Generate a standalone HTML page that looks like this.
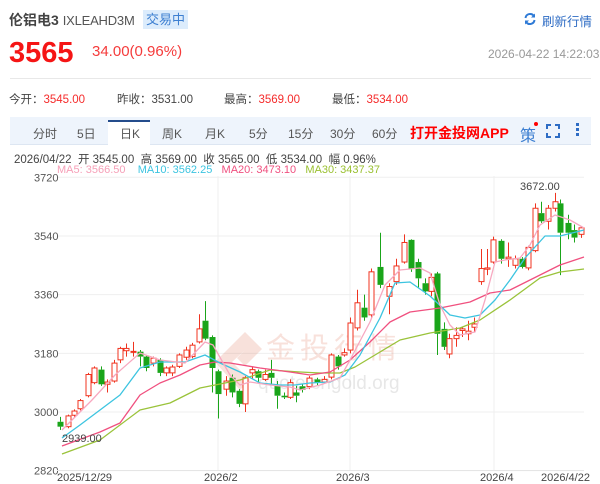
<!DOCTYPE html>
<html><head><meta charset="utf-8">
<style>
*{margin:0;padding:0;box-sizing:border-box}
body{width:600px;height:484px;background:#fff;font-family:"Liberation Sans","Noto Sans CJK SC",sans-serif;position:relative;overflow:hidden;color:#333}
.a{position:absolute;white-space:nowrap}
.red{color:#f52b2b}
</style></head><body>
<div class="a" style="left:9px;top:10px;font-size:14px;font-weight:bold;color:#444">伦铝电3 <span style="font-weight:normal;color:#555;font-size:13px;letter-spacing:-0.2px">IXLEAHD3M</span></div>
<div class="a" style="left:143px;top:10px;width:45px;height:19px;background:#dcecfc;color:#3d7fd1;font-size:13px;line-height:19px;text-align:center">交易中</div>
<svg class="a" style="left:523px;top:12px" width="14" height="14" viewBox="0 0 14 14"><path d="M2.5 6A4.6 4.6 0 0 1 11 4.2M11.5 8A4.6 4.6 0 0 1 3 9.8" fill="none" stroke="#2e7ad6" stroke-width="2"/><path d="M12 1.5V5.5H8z M2 12.5V8.5H6z" fill="#2e7ad6"/></svg>
<div class="a" style="left:542px;top:11px;font-size:12.5px;color:#2e6cc4">刷新行情</div>
<div class="a red" style="left:9px;top:37px;font-size:29px;font-weight:bold;color:#f51515">3565</div>
<div class="a red" style="left:92px;top:43px;font-size:15px;color:#f53b3b">34.00(0.96%)</div>
<div class="a" style="left:488px;top:47px;font-size:12px;color:#999">2026-04-22 14:22:03</div>
<div class="a" style="left:10px;top:78px;width:581px;height:1px;background:#e8e8e8"></div>
<div class="a" style="left:9px;top:91px;font-size:11.5px;color:#444">今开：<span class="red">3545.00</span></div>
<div class="a" style="left:117px;top:91px;font-size:11.5px;color:#444">昨收：3531.00</div>
<div class="a" style="left:224px;top:91px;font-size:11.5px;color:#444">最高：<span class="red">3569.00</span></div>
<div class="a" style="left:332px;top:91px;font-size:11.5px;color:#444">最低：<span class="red">3534.00</span></div>
<div class="a" style="left:10px;top:117px;width:581px;height:28px;background:#eef4fc;border-bottom:1px solid #dde6f2"></div>
<div class="a" style="left:108px;top:120px;width:42px;height:26px;background:#fff;border-top:2px solid #244c8c"></div>
<div class="a" style="top:125px;left:0;font-size:12px;color:#555;width:600px;height:16px">
<span class="a" style="left:33px">分时</span><span class="a" style="left:77px">5日</span><span class="a" style="left:120px">日K</span><span class="a" style="left:162px">周K</span><span class="a" style="left:205px">月K</span><span class="a" style="left:249px">5分</span><span class="a" style="left:288px">15分</span><span class="a" style="left:330px">30分</span><span class="a" style="left:372px">60分</span></div>
<div class="a" style="left:410px;top:123px;font-size:14px;font-weight:bold;color:#f00">打开金投网APP</div>
<div class="a" style="left:520px;top:122px;font-size:16px;color:#3d7fd1">策</div>
<div class="a" style="left:534px;top:122px;width:4px;height:4px;border-radius:2px;background:#f00"></div>
<svg class="a" style="left:546px;top:124px" width="14" height="14"><path d="M1 5V1H5M9 1H13V5M13 9V13H9M5 13H1V9" fill="none" stroke="#2e6cc4" stroke-width="2"/></svg>
<div class="a" style="left:576px;top:123px;width:3px;height:3px;background:#2e6cc4;box-shadow:0 5px 0 #2e6cc4,0 10px 0 #2e6cc4"></div>
<div class="a" style="left:14px;top:151px;font-size:11.5px;color:#444">2026/04/22&nbsp; 开 3545.00&nbsp; 高 3569.00&nbsp; 收 3565.00&nbsp; 低 3534.00&nbsp; 幅 0.96%</div>
<div class="a" style="left:57px;top:164px;font-size:11px"><span style="color:#f6a0b8">MA5: 3566.50</span>&nbsp;&nbsp;&nbsp;&nbsp;<span style="color:#3cc4e0">MA10: 3562.25</span>&nbsp;&nbsp;&nbsp;<span style="color:#f0507f">MA20: 3473.10</span>&nbsp;&nbsp;&nbsp;<span style="color:#9ac030">MA30: 3437.37</span></div>
<svg id="c" class="a" style="left:0;top:0" width="600" height="484"></svg>
<script>
var s='';
function Y(p){return 412-(p-3000)*0.326}
[3720,3540,3360,3180,3000,2820].forEach(function(p){var y=Y(p);s+='<line x1="57" x2="584" y1="'+y+'" y2="'+y+'" stroke="#efefef"/>';s+='<text x="34" y="'+(y+4)+'" font-size="11" fill="#555" font-family="Liberation Sans">'+p+'</text>';});
[218,350,494].forEach(function(x){s+='<line x1="'+x+'" x2="'+x+'" y1="176" y2="470" stroke="#efefef"/>'});
s+='<line x1="57" x2="584" y1="470.5" y2="470.5" stroke="#e5e5e5"/>';
s+='<g opacity="0.18"><path d="M215 362L245 332L262 349L245 366L237 358L245 350L232 362L250 380L240 390Z" fill="#d9593a"/></g>';
s+='<text x="266" y="358" font-size="29" fill="#e07a60" opacity="0.22" letter-spacing="5" font-family="Noto Sans CJK SC">金投行情</text>';
s+='<text x="258" y="389" font-size="19" fill="#bbb" opacity="0.35" font-family="Liberation Sans">quote.cngold.org</text>';
var C=[[60,2970,2955,2985,2945],[68,2955,2988,2992,2950],[74,2990,3003,3008,2985],[80,3010,3035,3040,3005],[88,3050,3115,3120,3045],[94,3090,3135,3140,3085],[101,3130,3085,3140,3080],[107,3085,3092,3100,3060],[114,3095,3150,3160,3090],[120,3160,3195,3200,3150],[126,3188,3195,3210,3170],[133,3184,3186,3215,3170],[140,3185,3170,3190,3140],[146,3170,3135,3175,3125],[153,3150,3165,3170,3140],[160,3160,3120,3165,3110],[166,3120,3135,3140,3110],[172,3120,3138,3145,3110],[179,3140,3175,3180,3135],[186,3168,3190,3200,3160],[192,3170,3205,3212,3165],[199,3215,3255,3300,3210],[205,3280,3225,3340,3220],[212,3230,3135,3235,3060],[218,3125,3055,3130,2980],[226,3070,3095,3110,3050],[232,3105,3060,3115,3045],[239,3065,3025,3070,3015],[245,3025,3105,3110,3000],[252,3120,3130,3140,3100],[258,3125,3105,3130,3090],[265,3100,3115,3130,3095],[271,3120,3105,3160,3085],[277,3080,3050,3095,3010],[284,3050,3045,3060,3040],[290,3045,3090,3100,3040],[296,3060,3050,3080,3030],[302,3079,3068,3085,3060],[309,3078,3104,3110,3070],[317,3100,3090,3105,3080],[324,3092,3100,3110,3088],[331,3107,3175,3180,3100],[338,3170,3140,3175,3130],[344,3175,3182,3195,3170],[350,3190,3273,3290,3180],[357,3258,3335,3375,3250],[364,3320,3290,3360,3280],[371,3298,3430,3440,3290],[380,3445,3390,3550,3380],[389,3355,3385,3395,3300],[396,3400,3448,3470,3390],[404,3460,3520,3545,3455],[411,3528,3440,3530,3430],[418,3460,3410,3470,3380],[425,3395,3370,3410,3360],[431,3370,3413,3425,3355],[437,3425,3240,3430,3175],[444,3255,3200,3275,3190],[449,3178,3225,3240,3165],[456,3225,3235,3260,3200],[462,3250,3255,3262,3230],[468,3240,3248,3280,3220],[474,3260,3270,3290,3245],[481,3400,3440,3500,3390],[487,3438,3442,3500,3420],[493,3460,3528,3538,3455],[501,3525,3470,3530,3455],[508,3470,3475,3520,3445],[515,3450,3470,3480,3440],[522,3470,3445,3475,3440],[528,3442,3505,3510,3435],[535,3495,3625,3640,3490],[541,3610,3585,3645,3580],[548,3585,3625,3635,3560],[555,3625,3645,3672,3615],[560,3640,3550,3652,3420],[568,3580,3550,3605,3530],[574,3558,3535,3575,3520],[581,3545,3565,3569,3534]];
C.forEach(function(c){var x=c[0],up=c[2]>=c[1],col=up?'#f0331f':'#1aa51a';
var t=Y(Math.max(c[1],c[2])),b=Y(Math.min(c[1],c[2]));if(b-t<1)b=t+1;
s+='<line x1="'+(x+0.5)+'" x2="'+(x+0.5)+'" y1="'+Y(c[3])+'" y2="'+t+'" stroke="'+col+'"/><line x1="'+(x+0.5)+'" x2="'+(x+0.5)+'" y1="'+b+'" y2="'+Y(c[4])+'" stroke="'+col+'"/>';
if(up)s+='<rect x="'+(x-2)+'" y="'+t+'" width="5" height="'+(b-t)+'" fill="#fff" stroke="'+col+'"/>';
else s+='<rect x="'+(x-2.5)+'" y="'+t+'" width="6" height="'+(b-t)+'" fill="'+col+'"/>';});
function L(pts,col){s+='<polyline fill="none" stroke="'+col+'" stroke-width="1.3" stroke-linejoin="round" points="'+pts+'"/>'}
L("62,454 100,440 140,410 170,403 200,388 215,385 240,380 270,370 300,372 320,373 340,373 355,367 380,352 400,340 430,333 460,328 480,320 510,300 540,278 560,272 584,269","#9ac33a");
L("62,446 100,432 120,423 140,395 160,383 180,375 200,365 215,362 230,363 260,368 290,372 310,375 330,372 350,360 370,342 390,322 410,312 440,308 470,302 490,293 510,290 540,275 560,265 584,257","#f0507f");
L("62,438 80,425 100,410 120,395 140,368 160,362 185,362 205,355 220,363 240,372 260,383 280,385 295,385 310,383 330,382 345,375 360,355 380,318 395,283 410,282 430,296 450,315 465,318 480,315 495,300 510,280 525,258 545,236 560,236 584,230","#3cc4e0");
L("62,430 92,400 115,375 140,353 160,360 185,363 205,342 213,345 230,375 240,385 250,382 270,385 290,387 300,390 320,385 340,378 350,360 370,322 385,285 400,270 420,268 430,273 440,305 450,325 460,335 475,332 485,300 495,262 505,260 520,258 530,245 540,225 555,215 570,220 584,228","#f7a8c0");
s+='<text x="62" y="442" font-size="11" fill="#444" font-family="Liberation Sans">2939.00</text>';
s+='<text x="520" y="190" font-size="11" fill="#444" font-family="Liberation Sans">3672.00</text>';
[["2025/12/29",57],["2026/2",204],["2026/3",336],["2026/4",480],["2026/4/22",541]].forEach(function(d){s+='<text x="'+d[1]+'" y="481" font-size="11" fill="#444" font-family="Liberation Sans">'+d[0]+'</text>'});
document.getElementById('c').innerHTML=s;
</script>
</body></html>
